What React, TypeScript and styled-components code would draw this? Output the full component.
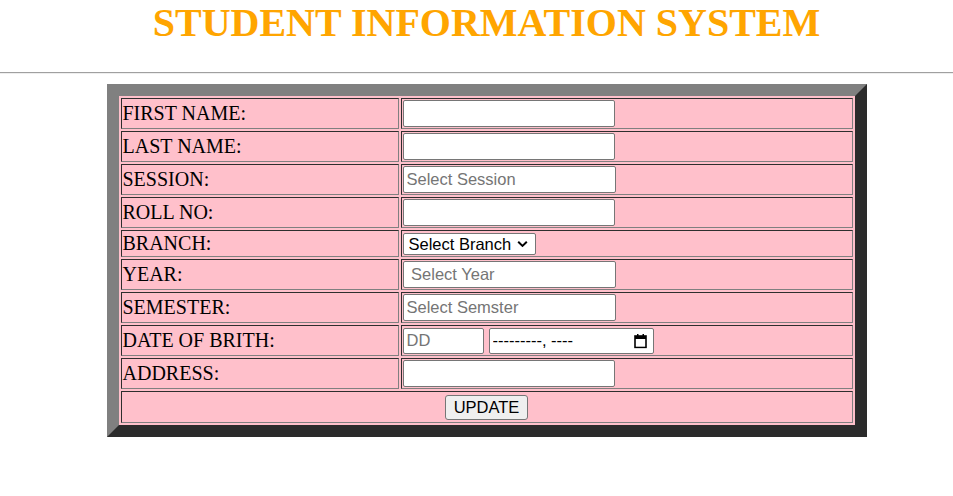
import React from "react";
import styled, { createGlobalStyle } from "styled-components";

const GlobalStyle = createGlobalStyle`
  html, body {
    margin: 0;
    padding: 0;
    background: #ffffff;
    font-family: "Liberation Serif", "Times New Roman", serif;
  }
`;

const Header = styled.header`
  padding-left: 20px;
`;

const Title = styled.h1`
  margin: 0;
  font-family: "Liberation Serif", "Times New Roman", serif;
  font-size: 40px;
  line-height: 45px;
  font-weight: bold;
  color: #ffa500;
  text-align: center;
`;

const Rule = styled.hr`
  margin: 27px 0 10px 0;
  border: none;
  border-top: 1px solid #a0a0a0;
  border-bottom: 1px solid #eeeeee;
  height: 0;
`;

const Main = styled.main`
  padding-left: 20px;
`;

const FormTable = styled.table`
  margin: 0 auto;
  width: 760px;
  border-collapse: separate;
  border-spacing: 2px;
  border-width: 12px;
  border-style: solid;
  border-color: #808080 #2b2b2b #2b2b2b #808080;
  background: #ffc0cb;
`;

const Cell = styled.td<{ $center?: boolean }>`
  padding: 1px;
  border-width: 1px;
  border-style: solid;
  border-color: #2e2e2e #808080 #808080 #2e2e2e;
  background: #ffc0cb;
  vertical-align: middle;
  text-align: ${(p) => (p.$center ? "center" : "left")};
`;

const LabelCell = styled(Cell)`
  width: 274px;
  font-family: "Liberation Serif", "Times New Roman", serif;
  font-size: 20px;
  color: #000;
  white-space: nowrap;
`;

const Field = styled.div<{ $h?: number; $center?: boolean }>`
  display: flex;
  align-items: center;
  justify-content: ${(p) => (p.$center ? "center" : "flex-start")};
  gap: 5px;
  height: ${(p) => p.$h ?? 27}px;
`;

const Plain = styled.input<{ $w?: number; $h?: number; $dark?: boolean }>`
  box-sizing: border-box;
  width: ${(p) => p.$w ?? 212}px;
  height: ${(p) => p.$h ?? 27}px;
  margin: 0;
  padding: 1px 3px;
  border: 1px solid #767676;
  border-radius: 2px;
  background: #fff;
  font-family: "Liberation Sans", Arial, sans-serif;
  font-size: 16.5px;
  color: #000;
  &::placeholder {
    color: ${(p) => (p.$dark ? "#000" : "#757575")};
  }
`;

const Picker = styled.span`
  position: relative;
  display: inline-flex;
`;

const PickerIcon = styled.svg`
  position: absolute;
  right: 7px;
  top: 50%;
  transform: translateY(-50%);
  pointer-events: none;
`;

const SelectWrap = styled.span`
  position: relative;
  display: inline-flex;
`;

const Select = styled.select`
  box-sizing: border-box;
  width: 133px;
  height: 22px;
  margin: 0;
  padding: 0 20px 0 5px;
  appearance: none;
  -webkit-appearance: none;
  border: 1px solid #767676;
  border-radius: 2px;
  background: #fff;
  font-family: "Liberation Sans", Arial, sans-serif;
  font-size: 16.5px;
  color: #000;
`;

const Chevron = styled.svg`
  position: absolute;
  right: 8px;
  top: 50%;
  transform: translateY(-50%);
  pointer-events: none;
`;

const Button = styled.button`
  box-sizing: border-box;
  height: 25px;
  margin: 0;
  padding: 1px 8px;
  border: 1px solid #767676;
  border-radius: 3px;
  background: #efefef;
  font-family: "Liberation Sans", Arial, sans-serif;
  font-size: 16.5px;
  color: #000;
`;

function MonthPicker() {
  return (
    <Picker>
      <Plain type="text" $w={165} $h={26} $dark placeholder="---------, ----" />
      <PickerIcon width="13" height="15" viewBox="0 0 13 15">
        <rect x="1" y="2.5" width="11" height="11.5" fill="none" stroke="#000" strokeWidth="1.6" />
        <rect x="1" y="2.5" width="11" height="3" fill="#000" />
        <rect x="3" y="0.5" width="1.5" height="2.5" fill="#000" />
        <rect x="8.5" y="0.5" width="1.5" height="2.5" fill="#000" />
      </PickerIcon>
    </Picker>
  );
}

function BranchSelect() {
  return (
    <SelectWrap>
      <Select defaultValue="">
        <option value="">Select Branch</option>
        <option value="cse">CSE</option>
        <option value="ece">ECE</option>
        <option value="me">ME</option>
      </Select>
      <Chevron width="11" height="7" viewBox="0 0 11 7">
        <path d="M1.2 1.2 L5.5 5.4 L9.8 1.2" fill="none" stroke="#000" strokeWidth="2" />
      </Chevron>
    </SelectWrap>
  );
}

type Row = {
  label: string;
  field: React.ReactNode;
  h?: number;
};

const rows: Row[] = [
  { label: "FIRST NAME:", field: <Plain type="text" /> },
  { label: "LAST NAME:", field: <Plain type="text" /> },
  { label: "SESSION:", field: <Plain type="text" $w={213} placeholder="Select Session" /> },
  { label: "ROLL NO:", field: <Plain type="text" /> },
  { label: "BRANCH:", h: 23, field: <BranchSelect /> },
  { label: "YEAR:", field: <Plain type="text" $w={213} placeholder=" Select Year" /> },
  { label: "SEMESTER:", field: <Plain type="text" $w={213} placeholder="Select Semster" /> },
  {
    label: "DATE OF BRITH:",
    field: (
      <>
        <Plain type="text" $w={81} $h={26} placeholder="DD" />
        <MonthPicker />
      </>
    ),
  },
  { label: "ADDRESS:", field: <Plain type="text" /> },
];

export default function App() {
  return (
    <>
      <GlobalStyle />
      <Header>
        <Title>STUDENT INFORMATION SYSTEM</Title>
      </Header>
      <Rule />
      <Main>
        <form onSubmit={(e) => e.preventDefault()}>
          <FormTable>
            <tbody>
              {rows.map((r) => (
                <tr key={r.label}>
                  <LabelCell>{r.label}</LabelCell>
                  <Cell>
                    <Field $h={r.h}>{r.field}</Field>
                  </Cell>
                </tr>
              ))}
              <tr>
                <Cell colSpan={2} $center>
                  <Field $h={28} $center>
                    <Button type="submit">UPDATE</Button>
                  </Field>
                </Cell>
              </tr>
            </tbody>
          </FormTable>
        </form>
      </Main>
    </>
  );
}
